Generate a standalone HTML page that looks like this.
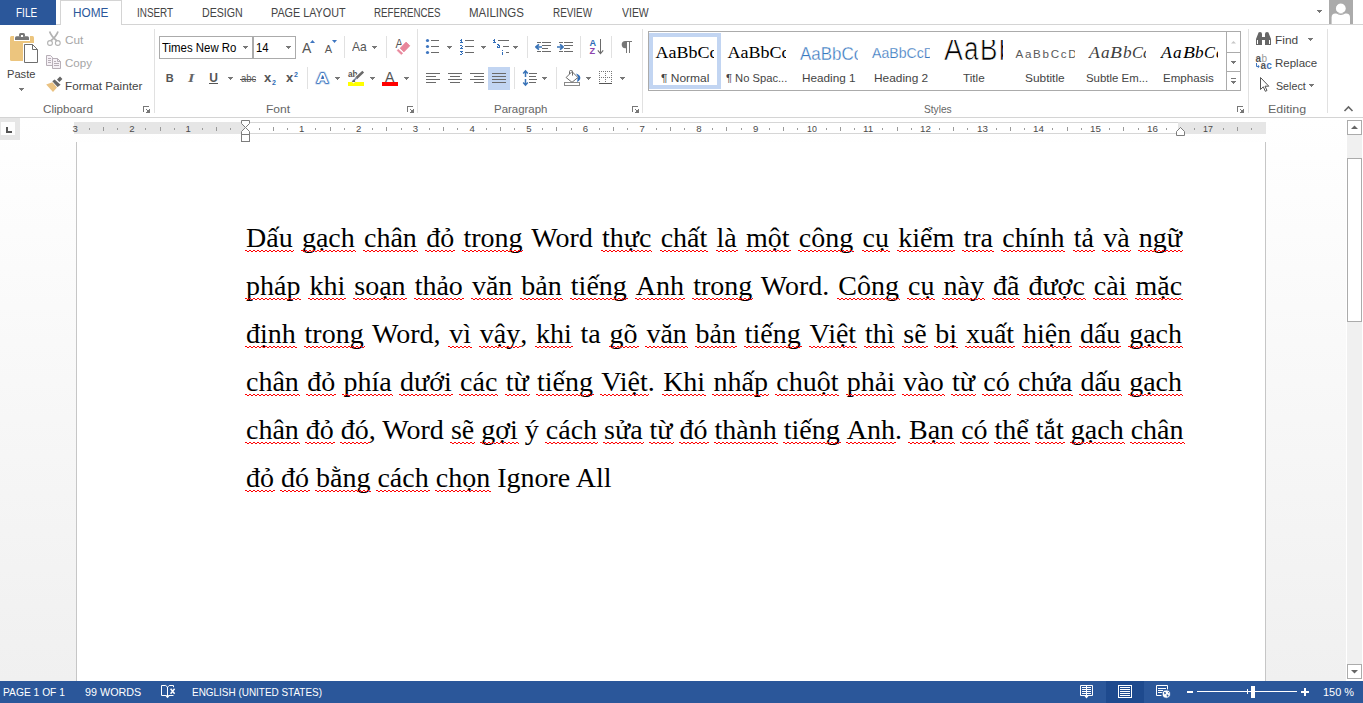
<!DOCTYPE html>
<html><head><meta charset="utf-8"><title>Word</title>
<style>
html,body{margin:0;padding:0;}
body{width:1363px;height:703px;overflow:hidden;position:relative;background:#fff;
 font-family:"Liberation Sans",sans-serif;font-size:12px;color:#444;}
.t{position:absolute;white-space:pre;line-height:normal;}
.b{position:absolute;box-sizing:border-box;}
#ws{left:0;top:118px;width:1363px;height:563px;background:linear-gradient(#ffffff,#f0f0f0);}
#page{left:76px;top:142px;width:1190px;height:539px;background:#fff;border-left:1px solid #c6c6c6;border-right:1px solid #c6c6c6;}
#status{left:0;top:681px;width:1363px;height:22px;background:#2b579a;}
#ico{position:absolute;left:0;top:0;}
.ln{position:absolute;left:246px;width:936px;height:48px;line-height:48px;white-space:nowrap;
 font-family:"Liberation Serif",serif;font-size:28px;color:#000;text-align:justify;text-align-last:justify;}
.ln.last{text-align:left;text-align-last:left;}
.s{position:relative;display:inline-block;line-height:48px;}
.s::after{content:"";position:absolute;left:-1px;right:-1px;top:36px;height:2px;
 background:linear-gradient(to right,#f00 2px,transparent 2px) 0 0/4px 1px repeat-x,
            linear-gradient(to right,transparent 2px,#f00 2px) 0 1px/4px 1px repeat-x;}
.clip{position:absolute;overflow:hidden;white-space:pre;}
.clip span{position:absolute;left:0;white-space:pre;line-height:normal;}
#ico rect{shape-rendering:crispEdges;}
.t{transform-origin:0 0;}

</style></head>
<body>
<div class="b" id="ws" style="left:0px;top:118px;width:1363px;height:563px;"></div>
<div class="b" id="page" style="left:76px;top:142px;width:1190px;height:539px;"></div>
<div class="b" id="status" style="left:0px;top:681px;width:1363px;height:22px;"></div>
<svg id="ico" width="1363" height="703" viewBox="0 0 1363 703">
<rect x="0" y="24" width="1363" height="1" fill="#d4d4d4" />
<rect x="0" y="0" width="56" height="25" fill="#2b579a" />
<rect x="60" y="0" width="62" height="25" fill="#d4d4d4" />
<rect x="61" y="1" width="60" height="24" fill="#fff" />
<rect x="0" y="117" width="1363" height="1" fill="#d4d4d4" />
<rect x="1329" y="0" width="24" height="24" fill="#ababab" />
<circle cx="1340.8" cy="8.4" r="4.9" fill="#fff"/>
<path d="M1331.6 24 V17.4 Q1331.6 13.6 1335.4 13.6 H1346.2 Q1350 13.6 1350 17.4 V24 Z" fill="#fff" stroke="none" stroke-width="1" />
<circle cx="1340.8" cy="8.4" r="6" fill="none" stroke="#ababab" stroke-width="1.1"/>
<rect x="1317" y="10" width="5" height="1" fill="#777" />
<rect x="1318" y="11" width="3" height="1" fill="#777" />
<rect x="1319" y="12" width="1" height="1" fill="#777" />
<rect x="154" y="29" width="1" height="84" fill="#e1e1e1" />
<rect x="417" y="29" width="1" height="84" fill="#e1e1e1" />
<rect x="642" y="29" width="1" height="84" fill="#e1e1e1" />
<rect x="1248" y="29" width="1" height="84" fill="#e1e1e1" />
<rect x="1327" y="29" width="1" height="84" fill="#e1e1e1" />
<rect x="344" y="36" width="1" height="22" fill="#e1e1e1" />
<rect x="386" y="36" width="1" height="22" fill="#e1e1e1" />
<rect x="527" y="36" width="1" height="22" fill="#e1e1e1" />
<rect x="580" y="36" width="1" height="22" fill="#e1e1e1" />
<rect x="611" y="36" width="1" height="22" fill="#e1e1e1" />
<rect x="307" y="67" width="1" height="22" fill="#e1e1e1" />
<rect x="514" y="67" width="1" height="22" fill="#e1e1e1" />
<rect x="556" y="67" width="1" height="22" fill="#e1e1e1" />
<rect x="143" y="106" width="6" height="1" fill="#777" />
<rect x="143" y="106" width="1" height="6" fill="#777" />
<rect x="146" y="109" width="1" height="1" fill="#777" />
<rect x="149" y="109" width="1" height="1" fill="#777" />
<rect x="147" y="110" width="3" height="3" fill="#777" />
<rect x="146" y="112" width="1" height="1" fill="#777" />
<rect x="407" y="106" width="6" height="1" fill="#777" />
<rect x="407" y="106" width="1" height="6" fill="#777" />
<rect x="410" y="109" width="1" height="1" fill="#777" />
<rect x="413" y="109" width="1" height="1" fill="#777" />
<rect x="411" y="110" width="3" height="3" fill="#777" />
<rect x="410" y="112" width="1" height="1" fill="#777" />
<rect x="632" y="106" width="6" height="1" fill="#777" />
<rect x="632" y="106" width="1" height="6" fill="#777" />
<rect x="635" y="109" width="1" height="1" fill="#777" />
<rect x="638" y="109" width="1" height="1" fill="#777" />
<rect x="636" y="110" width="3" height="3" fill="#777" />
<rect x="635" y="112" width="1" height="1" fill="#777" />
<rect x="1237" y="106" width="6" height="1" fill="#777" />
<rect x="1237" y="106" width="1" height="6" fill="#777" />
<rect x="1240" y="109" width="1" height="1" fill="#777" />
<rect x="1243" y="109" width="1" height="1" fill="#777" />
<rect x="1241" y="110" width="3" height="3" fill="#777" />
<rect x="1240" y="112" width="1" height="1" fill="#777" />
<path d="M1344.5 111 L1348.5 107 L1352.5 111" fill="none" stroke="#666" stroke-width="1.6" />
<path d="M10 37.5 q0 -1.5 1.5 -1.5 h21 q1.5 0 1.5 1.5 v22 q0 1.5 -1.5 1.5 h-21 q-1.5 0 -1.5 -1.5 Z" fill="#ecc57e" stroke="none" stroke-width="1" />
<rect x="14" y="36" width="16" height="5" fill="#fff" />
<path d="M15 40 v-2.3 q0 -1.5 1.5 -1.5 h11 q1.5 0 1.5 1.5 v2.3 Z" fill="#777" stroke="none" stroke-width="1" />
<path d="M19 36.5 v-2 q0 -1.5 1.5 -1.5 h3 q1.5 0 1.5 1.5 v2 Z" fill="#777" stroke="none" stroke-width="1" />
<rect x="21" y="35" width="2" height="2" fill="#fff" />
<rect x="23" y="43" width="16" height="21" fill="#fff" />
<path d="M24.5 44.5 h8 l5 5 v13 h-13 Z" fill="#fff" stroke="#6e6e6e" stroke-width="1" />
<path d="M32.5 44.5 v5 h5" fill="none" stroke="#6e6e6e" stroke-width="1" />
<rect x="19" y="88" width="5" height="1" fill="#777" />
<rect x="20" y="89" width="3" height="1" fill="#777" />
<rect x="21" y="90" width="1" height="1" fill="#777" />
<path d="M49.6 31.5 Q51 36 57 41 M58 31.5 Q56.6 36 50.6 41" fill="none" stroke="#b2b2b2" stroke-width="1.7" />
<circle cx="50" cy="43" r="2.4" fill="#fff" stroke="#b2b2b2" stroke-width="1.1"/>
<circle cx="57.8" cy="43" r="2.4" fill="#fff" stroke="#b2b2b2" stroke-width="1.1"/>
<path d="M46.5 55.5 h4 l2 2 v8 h-6 Z" fill="#f6f1f6" stroke="#b7afb7" stroke-width="1" />
<rect x="48" y="58" width="3" height="1" fill="#b7afb7" />
<rect x="48" y="60" width="3" height="1" fill="#b7afb7" />
<rect x="48" y="62" width="3" height="1" fill="#b7afb7" />
<path d="M52.5 58.5 h5 l3 3 v7 h-8 Z" fill="#f6f1f6" stroke="#b7afb7" stroke-width="1" />
<path d="M57.5 58.5 v3 h3" fill="none" stroke="#b7afb7" stroke-width="1" />
<rect x="54" y="61" width="2" height="1" fill="#b7afb7" />
<rect x="54" y="63" width="5" height="1" fill="#b7afb7" />
<rect x="54" y="65" width="5" height="1" fill="#b7afb7" />
<path d="M46.2 84.6 L52.4 82.2 L57 87.6 L53 92 Z" fill="#eac282" stroke="none" stroke-width="1" />
<path d="M52.3 81.2 L54.6 79.4 L60.6 84.8 L57.6 87 Z" fill="#666" stroke="none" stroke-width="1" />
<path d="M57 79.5 L60 76.6 L62.4 79 L59.4 82 Z" fill="#666" stroke="none" stroke-width="1" />
<rect x="159" y="36" width="94" height="23" fill="#ababab" />
<rect x="160" y="37" width="92" height="21" fill="#fff" />
<rect x="253" y="36" width="43" height="23" fill="#ababab" />
<rect x="254" y="37" width="41" height="21" fill="#fff" />
<rect x="243" y="46" width="5" height="1" fill="#777" />
<rect x="244" y="47" width="3" height="1" fill="#777" />
<rect x="245" y="48" width="1" height="1" fill="#777" />
<rect x="286" y="46" width="5" height="1" fill="#777" />
<rect x="287" y="47" width="3" height="1" fill="#777" />
<rect x="288" y="48" width="1" height="1" fill="#777" />
<rect x="209" y="83" width="9" height="1" fill="#555" />
<rect x="240" y="79" width="16" height="1" fill="#555" />
<rect x="228" y="77" width="5" height="1" fill="#777" />
<rect x="229" y="78" width="3" height="1" fill="#777" />
<rect x="230" y="79" width="1" height="1" fill="#777" />
<path d="M310 43 L312.5 40 L315 43 Z" fill="#3e76c0" stroke="none" stroke-width="1" />
<path d="M332 40 H337 L334.5 43 Z" fill="#3e76c0" stroke="none" stroke-width="1" />
<rect x="372" y="46" width="5" height="1" fill="#777" />
<rect x="373" y="47" width="3" height="1" fill="#777" />
<rect x="374" y="48" width="1" height="1" fill="#777" />
<text x="395.4" y="48.3" font-family="Liberation Sans, sans-serif" font-size="12.2" fill="#555" textLength="7.4" lengthAdjust="spacingAndGlyphs">A</text>
<path d="M406.1 41.9 L410 45.8 L403.9 52.1 L400 48.2 Z" fill="#fff" stroke="#fff" stroke-width="2.4" stroke-linejoin="round"/>
<path d="M406.1 42.1 L409.8 45.8 L403.9 51.9 L400.2 48.2 Z" fill="#e8869b" stroke="#e8869b" stroke-width="0.8" stroke-linejoin="round"/>
<path d="M398.2 49.2 L402.8 53.3 L401.3 54.6 L397.1 50.6 Z" fill="#e8869b" stroke="#e8869b" stroke-width="0.5" stroke-linejoin="round"/>
<text x="316.3" y="83.3" font-family="Liberation Sans, sans-serif" font-size="15.5" font-weight="bold" textLength="12.2" lengthAdjust="spacingAndGlyphs" fill="none" stroke="#c3d6ef" stroke-width="3.2" stroke-linejoin="round">A</text>
<text x="316.3" y="83.3" font-family="Liberation Sans, sans-serif" font-size="15.5" font-weight="bold" textLength="12.2" lengthAdjust="spacingAndGlyphs" fill="#fff" stroke="#2f6cb8" stroke-width="1.5" stroke-linejoin="round" paint-order="stroke">A</text>
<path d="M321.6 78.6 L322.9 75.2 L324.2 78.6 Z" fill="#2f6cb8" stroke="none" stroke-width="1" />
<rect x="335" y="77" width="5" height="1" fill="#777" />
<rect x="336" y="78" width="3" height="1" fill="#777" />
<rect x="337" y="79" width="1" height="1" fill="#777" />
<rect x="348" y="82" width="16" height="4" fill="#ffff00" />
<text x="348" y="77" font-family="Liberation Sans, sans-serif" font-size="8.4" font-weight="bold" fill="#555" textLength="9.6" lengthAdjust="spacingAndGlyphs">ab</text>
<path d="M363.4 71.4 L352 81.8" fill="none" stroke="#fff" stroke-width="4.4" />
<path d="M363.2 71.6 L356.2 78.2" fill="none" stroke="#6a6a6a" stroke-width="2.6" />
<path d="M356.8 77.6 L352.6 81.6" fill="none" stroke="#8090a8" stroke-width="1.8" />
<path d="M351.6 82 L354.6 79.2 L355.2 82 Z" fill="#666" stroke="none" stroke-width="1" />
<rect x="370" y="77" width="5" height="1" fill="#777" />
<rect x="371" y="78" width="3" height="1" fill="#777" />
<rect x="372" y="79" width="1" height="1" fill="#777" />
<rect x="382" y="82" width="16" height="4" fill="#ff0000" />
<rect x="404" y="77" width="5" height="1" fill="#777" />
<rect x="405" y="78" width="3" height="1" fill="#777" />
<rect x="406" y="79" width="1" height="1" fill="#777" />
<circle cx="427.5" cy="40.5" r="1.6" fill="#3e76c0"/>
<rect x="431" y="40" width="8" height="1" fill="#6a6a6a" />
<circle cx="427.5" cy="46.5" r="1.6" fill="#3e76c0"/>
<rect x="431" y="46" width="8" height="1" fill="#6a6a6a" />
<circle cx="427.5" cy="52.5" r="1.6" fill="#3e76c0"/>
<rect x="431" y="52" width="8" height="1" fill="#6a6a6a" />
<rect x="447" y="46" width="5" height="1" fill="#777" />
<rect x="448" y="47" width="3" height="1" fill="#777" />
<rect x="449" y="48" width="1" height="1" fill="#777" />
<rect x="461" y="39" width="1" height="1" fill="#316db8" />
<rect x="460" y="40" width="1" height="1" fill="#316db8" />
<rect x="461" y="40" width="1" height="1" fill="#316db8" />
<rect x="461" y="41" width="1" height="1" fill="#316db8" />
<rect x="460" y="42" width="1" height="1" fill="#316db8" />
<rect x="461" y="42" width="1" height="1" fill="#316db8" />
<rect x="462" y="42" width="1" height="1" fill="#316db8" />
<rect x="460" y="45" width="1" height="1" fill="#316db8" />
<rect x="461" y="45" width="1" height="1" fill="#316db8" />
<rect x="462" y="46" width="1" height="1" fill="#316db8" />
<rect x="461" y="47" width="1" height="1" fill="#316db8" />
<rect x="460" y="48" width="1" height="1" fill="#316db8" />
<rect x="461" y="48" width="1" height="1" fill="#316db8" />
<rect x="462" y="48" width="1" height="1" fill="#316db8" />
<rect x="460" y="51" width="1" height="1" fill="#316db8" />
<rect x="461" y="51" width="1" height="1" fill="#316db8" />
<rect x="462" y="51" width="1" height="1" fill="#316db8" />
<rect x="461" y="52" width="1" height="1" fill="#316db8" />
<rect x="462" y="53" width="1" height="1" fill="#316db8" />
<rect x="460" y="54" width="1" height="1" fill="#316db8" />
<rect x="461" y="54" width="1" height="1" fill="#316db8" />
<rect x="465" y="40" width="9" height="1" fill="#6a6a6a" />
<rect x="465" y="46" width="9" height="1" fill="#6a6a6a" />
<rect x="465" y="52" width="9" height="1" fill="#6a6a6a" />
<rect x="481" y="46" width="5" height="1" fill="#777" />
<rect x="482" y="47" width="3" height="1" fill="#777" />
<rect x="483" y="48" width="1" height="1" fill="#777" />
<rect x="494" y="39" width="1" height="1" fill="#316db8" />
<rect x="493" y="40" width="1" height="1" fill="#316db8" />
<rect x="494" y="40" width="1" height="1" fill="#316db8" />
<rect x="494" y="41" width="1" height="1" fill="#316db8" />
<rect x="493" y="42" width="1" height="1" fill="#316db8" />
<rect x="494" y="42" width="1" height="1" fill="#316db8" />
<rect x="495" y="42" width="1" height="1" fill="#316db8" />
<rect x="497" y="44" width="1" height="1" fill="#316db8" />
<rect x="498" y="44" width="1" height="1" fill="#316db8" />
<rect x="498" y="45" width="1" height="1" fill="#316db8" />
<rect x="499" y="45" width="1" height="1" fill="#316db8" />
<rect x="497" y="46" width="1" height="1" fill="#316db8" />
<rect x="499" y="46" width="1" height="1" fill="#316db8" />
<rect x="497" y="47" width="1" height="1" fill="#316db8" />
<rect x="498" y="47" width="1" height="1" fill="#316db8" />
<rect x="499" y="47" width="1" height="1" fill="#316db8" />
<rect x="502" y="50" width="1" height="1" fill="#316db8" />
<rect x="502" y="52" width="1" height="3" fill="#316db8" />
<rect x="498" y="40" width="11" height="1" fill="#6a6a6a" />
<rect x="503" y="46" width="6" height="1" fill="#6a6a6a" />
<rect x="506" y="52" width="3" height="1" fill="#6a6a6a" />
<rect x="513" y="46" width="5" height="1" fill="#777" />
<rect x="514" y="47" width="3" height="1" fill="#777" />
<rect x="515" y="48" width="1" height="1" fill="#777" />
<rect x="537" y="42" width="4" height="1" fill="#6a6a6a" />
<rect x="542" y="42" width="9" height="1" fill="#6a6a6a" />
<rect x="537" y="51" width="4" height="1" fill="#6a6a6a" />
<rect x="542" y="51" width="9" height="1" fill="#6a6a6a" />
<rect x="542" y="45" width="9" height="1" fill="#6a6a6a" />
<rect x="542" y="48" width="6" height="1" fill="#6a6a6a" />
<path d="M542 47 H535.8 M539 44.3 L535.9 47 L539 49.7" fill="none" stroke="#3a74b8" stroke-width="1.7" stroke-linejoin="round"/>
<rect x="559" y="42" width="4" height="1" fill="#6a6a6a" />
<rect x="564" y="42" width="9" height="1" fill="#6a6a6a" />
<rect x="559" y="51" width="4" height="1" fill="#6a6a6a" />
<rect x="564" y="51" width="9" height="1" fill="#6a6a6a" />
<rect x="564" y="45" width="9" height="1" fill="#6a6a6a" />
<rect x="564" y="48" width="6" height="1" fill="#6a6a6a" />
<path d="M557 47 H563.2 M560 44.3 L563.1 47 L560 49.7" fill="none" stroke="#3a74b8" stroke-width="1.7" stroke-linejoin="round"/>
<text x="589.6" y="46" font-family="Liberation Sans, sans-serif" font-size="9.6" font-weight="bold" fill="#2f6cb8" textLength="6.6" lengthAdjust="spacingAndGlyphs">A</text>
<text x="589.6" y="54" font-family="Liberation Sans, sans-serif" font-size="9.6" font-weight="bold" fill="#8e44ad" textLength="5.6" lengthAdjust="spacingAndGlyphs">Z</text>
<rect x="600" y="39" width="1" height="15" fill="#6a6a6a" />
<path d="M597.8 50.3 L600.5 53.6 L603.2 50.3" fill="none" stroke="#6a6a6a" stroke-width="1.1" />
<path d="M626 41 h-0.7 a3.6 3.6 0 0 0 0 7.2 h0.7 Z" fill="#777" stroke="none" stroke-width="1" />
<rect x="626" y="41" width="1" height="12" fill="#777" />
<rect x="629" y="41" width="1" height="12" fill="#777" />
<rect x="625" y="41" width="7" height="1" fill="#777" />
<rect x="488" y="67" width="22" height="23" fill="#c2d5f2" />
<rect x="426" y="73" width="14" height="1" fill="#6a6a6a" />
<rect x="448" y="73" width="14" height="1" fill="#6a6a6a" />
<rect x="470" y="73" width="14" height="1" fill="#6a6a6a" />
<rect x="492" y="73" width="14" height="1" fill="#6a6a6a" />
<rect x="529" y="73" width="8" height="1" fill="#6a6a6a" />
<rect x="426" y="76" width="10" height="1" fill="#6a6a6a" />
<rect x="450" y="76" width="10" height="1" fill="#6a6a6a" />
<rect x="474" y="76" width="10" height="1" fill="#6a6a6a" />
<rect x="492" y="76" width="14" height="1" fill="#6a6a6a" />
<rect x="529" y="76" width="7" height="1" fill="#6a6a6a" />
<rect x="426" y="79" width="14" height="1" fill="#6a6a6a" />
<rect x="448" y="79" width="14" height="1" fill="#6a6a6a" />
<rect x="470" y="79" width="14" height="1" fill="#6a6a6a" />
<rect x="492" y="79" width="14" height="1" fill="#6a6a6a" />
<rect x="529" y="79" width="8" height="1" fill="#6a6a6a" />
<rect x="426" y="82" width="10" height="1" fill="#6a6a6a" />
<rect x="450" y="82" width="10" height="1" fill="#6a6a6a" />
<rect x="474" y="82" width="10" height="1" fill="#6a6a6a" />
<rect x="492" y="82" width="14" height="1" fill="#6a6a6a" />
<rect x="529" y="82" width="7" height="1" fill="#6a6a6a" />
<path d="M525.5 70.6 V77 M523.2 73.4 L525.5 70.8 L527.8 73.4 M525.5 79 V85.4 M523.2 82.6 L525.5 85.2 L527.8 82.6" fill="none" stroke="#3a74b8" stroke-width="1.5" />
<rect x="542" y="77" width="5" height="1" fill="#777" />
<rect x="543" y="78" width="3" height="1" fill="#777" />
<rect x="544" y="79" width="1" height="1" fill="#777" />
<rect x="564" y="82" width="16" height="4" fill="#8a8a8a" />
<rect x="565" y="83" width="14" height="2" fill="#fff" />
<path d="M576 73.4 Q581.2 75 580.2 79 Q579.4 81 577 82 Q577.8 79.6 577.4 78 L578.4 77.5 Z" fill="#2f6cb8" stroke="none" stroke-width="1" />
<path d="M572 71.6 L577.9 77.5 L572 82.3 L566.1 77.5 Z" fill="#fff" stroke="#6a6a6a" stroke-width="1" />
<path d="M569.5 74 V71.5 Q569.5 70.5 570.5 70.5 H571.5 Q572.5 70.5 572.5 71.5 V75.6" fill="none" stroke="#6a6a6a" stroke-width="1" />
<rect x="586" y="77" width="5" height="1" fill="#777" />
<rect x="587" y="78" width="3" height="1" fill="#777" />
<rect x="588" y="79" width="1" height="1" fill="#777" />
<rect x="599" y="71" width="1" height="1" fill="#777" />
<rect x="601" y="71" width="1" height="1" fill="#777" />
<rect x="603" y="71" width="1" height="1" fill="#777" />
<rect x="605" y="71" width="1" height="1" fill="#777" />
<rect x="607" y="71" width="1" height="1" fill="#777" />
<rect x="609" y="71" width="1" height="1" fill="#777" />
<rect x="611" y="71" width="1" height="1" fill="#777" />
<rect x="599" y="77" width="1" height="1" fill="#777" />
<rect x="601" y="77" width="1" height="1" fill="#777" />
<rect x="603" y="77" width="1" height="1" fill="#777" />
<rect x="605" y="77" width="1" height="1" fill="#777" />
<rect x="607" y="77" width="1" height="1" fill="#777" />
<rect x="609" y="77" width="1" height="1" fill="#777" />
<rect x="611" y="77" width="1" height="1" fill="#777" />
<rect x="599" y="71" width="1" height="1" fill="#777" />
<rect x="599" y="73" width="1" height="1" fill="#777" />
<rect x="599" y="75" width="1" height="1" fill="#777" />
<rect x="599" y="77" width="1" height="1" fill="#777" />
<rect x="599" y="79" width="1" height="1" fill="#777" />
<rect x="599" y="81" width="1" height="1" fill="#777" />
<rect x="605" y="71" width="1" height="1" fill="#777" />
<rect x="605" y="73" width="1" height="1" fill="#777" />
<rect x="605" y="75" width="1" height="1" fill="#777" />
<rect x="605" y="77" width="1" height="1" fill="#777" />
<rect x="605" y="79" width="1" height="1" fill="#777" />
<rect x="605" y="81" width="1" height="1" fill="#777" />
<rect x="611" y="71" width="1" height="1" fill="#777" />
<rect x="611" y="73" width="1" height="1" fill="#777" />
<rect x="611" y="75" width="1" height="1" fill="#777" />
<rect x="611" y="77" width="1" height="1" fill="#777" />
<rect x="611" y="79" width="1" height="1" fill="#777" />
<rect x="611" y="81" width="1" height="1" fill="#777" />
<rect x="599" y="83" width="13" height="1" fill="#555" />
<rect x="620" y="77" width="5" height="1" fill="#777" />
<rect x="621" y="78" width="3" height="1" fill="#777" />
<rect x="622" y="79" width="1" height="1" fill="#777" />
<rect x="648" y="31" width="593" height="60" fill="#ababab" />
<rect x="649" y="32" width="591" height="58" fill="#fff" />
<rect x="649" y="33" width="72" height="56" fill="#c2d5f2" />
<rect x="653" y="37" width="64" height="48" fill="#fff" />
<rect x="1226" y="32" width="1" height="58" fill="#ababab" />
<rect x="1227" y="52" width="13" height="1" fill="#ababab" />
<rect x="1227" y="71" width="13" height="1" fill="#ababab" />
<path d="M1231 43.5 L1233.5 41 L1236 43.5 Z" fill="#c8c8c8" stroke="none" stroke-width="1" />
<rect x="1231" y="61" width="5" height="1" fill="#777" />
<rect x="1232" y="62" width="3" height="1" fill="#777" />
<rect x="1233" y="63" width="1" height="1" fill="#777" />
<rect x="1231" y="78" width="5" height="1" fill="#777" />
<rect x="1231" y="81" width="5" height="1" fill="#777" />
<rect x="1232" y="82" width="3" height="1" fill="#777" />
<rect x="1233" y="83" width="1" height="1" fill="#777" />
<path d="M1256 45 v-6 l2 -5 q0 -2 2 -2 q2 0 2 2 v3 h3 v-3 q0 -2 2 -2 q2 0 2 2 l2 5 v6 h-6 v-5 h-3 v5 Z" fill="#666" stroke="none" stroke-width="1" />
<rect x="1257" y="40" width="1" height="4" fill="#fff" />
<rect x="1269" y="40" width="1" height="4" fill="#fff" />
<rect x="1308" y="38" width="5" height="1" fill="#777" />
<rect x="1309" y="39" width="3" height="1" fill="#777" />
<rect x="1310" y="40" width="1" height="1" fill="#777" />
<text x="1255.6" y="61.5" font-family="Liberation Sans, sans-serif" font-size="10" fill="#555" font-weight="bold">a</text>
<text x="1261.4" y="61.5" font-family="Liberation Sans, sans-serif" font-size="10" fill="#999">b</text>
<text x="1260.4" y="68.6" font-family="Liberation Sans, sans-serif" font-size="10" fill="#555" font-weight="bold">a</text>
<text x="1266.2" y="68.6" font-family="Liberation Sans, sans-serif" font-size="10" fill="#3e76c0" font-weight="bold">c</text>
<path d="M1256.5 63 v3.5 h2.5 M1257.8 65.2 L1259.3 66.5 L1257.8 67.8" fill="none" stroke="#3e76c0" stroke-width="1" />
<path d="M1260.5 77.5 V89.5 L1263.3 86.8 L1265.3 91.3 L1267 90.5 L1265 86.2 H1268.8 Z" fill="#fff" stroke="#555" stroke-width="1" />
<rect x="1309" y="84" width="5" height="1" fill="#777" />
<rect x="1310" y="85" width="3" height="1" fill="#777" />
<rect x="1311" y="86" width="1" height="1" fill="#777" />
<rect x="0" y="118" width="20" height="22" fill="#e6e6e6" />
<rect x="1" y="122" width="14" height="13" fill="#fdfdfd" />
<rect x="6" y="127" width="2" height="6" fill="#555" />
<rect x="6" y="131" width="6" height="2" fill="#555" />
<rect x="74" y="122" width="1192" height="12" fill="#e6e6e6" />
<rect x="246" y="122" width="932" height="12" fill="#fff" />
<rect x="246" y="122" width="932" height="1" fill="#d6d6d6" />
<rect x="246" y="133" width="932" height="1" fill="#d6d6d6" />
<rect x="89" y="128" width="1" height="2" fill="#9a9a9a" />
<rect x="103" y="127" width="1" height="4" fill="#9a9a9a" />
<rect x="117" y="128" width="1" height="2" fill="#9a9a9a" />
<rect x="145" y="128" width="1" height="2" fill="#9a9a9a" />
<rect x="160" y="127" width="1" height="4" fill="#9a9a9a" />
<rect x="174" y="128" width="1" height="2" fill="#9a9a9a" />
<rect x="202" y="128" width="1" height="2" fill="#9a9a9a" />
<rect x="216" y="127" width="1" height="4" fill="#9a9a9a" />
<rect x="230" y="128" width="1" height="2" fill="#9a9a9a" />
<rect x="259" y="128" width="1" height="2" fill="#9a9a9a" />
<rect x="273" y="127" width="1" height="4" fill="#9a9a9a" />
<rect x="287" y="128" width="1" height="2" fill="#9a9a9a" />
<rect x="315" y="128" width="1" height="2" fill="#9a9a9a" />
<rect x="330" y="127" width="1" height="4" fill="#9a9a9a" />
<rect x="344" y="128" width="1" height="2" fill="#9a9a9a" />
<rect x="372" y="128" width="1" height="2" fill="#9a9a9a" />
<rect x="386" y="127" width="1" height="4" fill="#9a9a9a" />
<rect x="401" y="128" width="1" height="2" fill="#9a9a9a" />
<rect x="429" y="128" width="1" height="2" fill="#9a9a9a" />
<rect x="443" y="127" width="1" height="4" fill="#9a9a9a" />
<rect x="457" y="128" width="1" height="2" fill="#9a9a9a" />
<rect x="486" y="128" width="1" height="2" fill="#9a9a9a" />
<rect x="500" y="127" width="1" height="4" fill="#9a9a9a" />
<rect x="514" y="128" width="1" height="2" fill="#9a9a9a" />
<rect x="542" y="128" width="1" height="2" fill="#9a9a9a" />
<rect x="556" y="127" width="1" height="4" fill="#9a9a9a" />
<rect x="571" y="128" width="1" height="2" fill="#9a9a9a" />
<rect x="599" y="128" width="1" height="2" fill="#9a9a9a" />
<rect x="613" y="127" width="1" height="4" fill="#9a9a9a" />
<rect x="627" y="128" width="1" height="2" fill="#9a9a9a" />
<rect x="656" y="128" width="1" height="2" fill="#9a9a9a" />
<rect x="670" y="127" width="1" height="4" fill="#9a9a9a" />
<rect x="684" y="128" width="1" height="2" fill="#9a9a9a" />
<rect x="712" y="128" width="1" height="2" fill="#9a9a9a" />
<rect x="726" y="127" width="1" height="4" fill="#9a9a9a" />
<rect x="741" y="128" width="1" height="2" fill="#9a9a9a" />
<rect x="769" y="128" width="1" height="2" fill="#9a9a9a" />
<rect x="783" y="127" width="1" height="4" fill="#9a9a9a" />
<rect x="797" y="128" width="1" height="2" fill="#9a9a9a" />
<rect x="826" y="128" width="1" height="2" fill="#9a9a9a" />
<rect x="840" y="127" width="1" height="4" fill="#9a9a9a" />
<rect x="854" y="128" width="1" height="2" fill="#9a9a9a" />
<rect x="882" y="128" width="1" height="2" fill="#9a9a9a" />
<rect x="897" y="127" width="1" height="4" fill="#9a9a9a" />
<rect x="911" y="128" width="1" height="2" fill="#9a9a9a" />
<rect x="939" y="128" width="1" height="2" fill="#9a9a9a" />
<rect x="953" y="127" width="1" height="4" fill="#9a9a9a" />
<rect x="967" y="128" width="1" height="2" fill="#9a9a9a" />
<rect x="996" y="128" width="1" height="2" fill="#9a9a9a" />
<rect x="1010" y="127" width="1" height="4" fill="#9a9a9a" />
<rect x="1024" y="128" width="1" height="2" fill="#9a9a9a" />
<rect x="1052" y="128" width="1" height="2" fill="#9a9a9a" />
<rect x="1067" y="127" width="1" height="4" fill="#9a9a9a" />
<rect x="1081" y="128" width="1" height="2" fill="#9a9a9a" />
<rect x="1109" y="128" width="1" height="2" fill="#9a9a9a" />
<rect x="1123" y="127" width="1" height="4" fill="#9a9a9a" />
<rect x="1138" y="128" width="1" height="2" fill="#9a9a9a" />
<rect x="1166" y="128" width="1" height="2" fill="#9a9a9a" />
<rect x="1180" y="127" width="1" height="4" fill="#9a9a9a" />
<rect x="1194" y="128" width="1" height="2" fill="#9a9a9a" />
<rect x="1223" y="128" width="1" height="2" fill="#9a9a9a" />
<rect x="1237" y="127" width="1" height="4" fill="#9a9a9a" />
<rect x="1251" y="128" width="1" height="2" fill="#9a9a9a" />
<path d="M241.5 120.5 h8 v3 l-4 4 l-4 -4 Z" fill="#fff" stroke="#7d7d7d" stroke-width="1"/>
<path d="M241.5 134.5 v-3 l4 -4 l4 4 v3 Z" fill="#fff" stroke="#7d7d7d" stroke-width="1"/>
<rect x="241.5" y="134.5" width="8" height="7" fill="#fff" stroke="#7d7d7d" stroke-width="1" style="shape-rendering:auto"/>
<path d="M1176.5 135.5 v-4 l4 -4 l4 4 v4 Z" fill="#fff" stroke="#7d7d7d" stroke-width="1"/>
<rect x="1346" y="118" width="17" height="563" fill="#fff" />
<rect x="1347" y="135" width="15" height="530" fill="#f0f0f0" />
<rect x="1347.5" y="120.5" width="14" height="14" fill="#fff" stroke="#ababab" stroke-width="1"/>
<path d="M1351 129 L1354.5 125.5 L1358 129 Z" fill="#666" stroke="none" stroke-width="1" />
<rect x="1347.5" y="158.5" width="14" height="163" fill="#fff" stroke="#ababab" stroke-width="1"/>
<rect x="1347.5" y="664.5" width="14" height="14" fill="#fff" stroke="#ababab" stroke-width="1"/>
<path d="M1351 670 H1358 L1354.5 673.5 Z" fill="#666" stroke="none" stroke-width="1" />
<path d="M167.5 687.2 L165.8 685.5 H161.5 V695.5 H166.5" fill="none" stroke="#fff" stroke-width="1" />
<path d="M167.5 687.2 L169.2 685.5 H173.5 V687.2" fill="none" stroke="#fff" stroke-width="1" />
<path d="M168.5 695.5 H173.5" fill="none" stroke="#fff" stroke-width="1" />
<rect x="167" y="687" width="1" height="10" fill="#fff" />
<path d="M165.2 695.6 L167.5 698.3 L169.8 695.6 Z" fill="#fff" stroke="none" stroke-width="1" />
<path d="M170.6 688.7 L174.6 693.7 M174.6 688.7 L170.6 693.7" fill="none" stroke="#fff" stroke-width="1.5" />
<path d="M1080.5 685.5 h12 v10 h-12 Z" fill="none" stroke="#fff" stroke-width="1" />
<rect x="1086" y="686" width="1" height="12" fill="#fff" />
<path d="M1084.5 696 L1086.5 698.4 L1088.5 696 Z" fill="#fff" stroke="none" stroke-width="1" />
<rect x="1082" y="687" width="4" height="1" fill="#fff" />
<rect x="1087" y="687" width="4" height="1" fill="#fff" />
<rect x="1082" y="689" width="4" height="1" fill="#fff" />
<rect x="1087" y="689" width="4" height="1" fill="#fff" />
<rect x="1082" y="691" width="4" height="1" fill="#fff" />
<rect x="1087" y="691" width="4" height="1" fill="#fff" />
<rect x="1082" y="693" width="4" height="1" fill="#fff" />
<rect x="1087" y="693" width="4" height="1" fill="#fff" />
<rect x="1106" y="681" width="38" height="22" fill="#1e4a8e" />
<rect x="1118" y="685" width="14" height="13" fill="#fff" />
<rect x="1119" y="686" width="12" height="11" fill="#1e4a8e" />
<rect x="1120" y="687" width="10" height="1" fill="#fff" />
<rect x="1120" y="689" width="10" height="1" fill="#fff" />
<rect x="1120" y="691" width="10" height="1" fill="#fff" />
<rect x="1120" y="693" width="10" height="1" fill="#fff" />
<rect x="1120" y="695" width="10" height="1" fill="#fff" />
<path d="M1156.5 685.5 h11 v4 M1156.5 685.5 v10 h5" fill="none" stroke="#fff" stroke-width="1" />
<rect x="1158" y="688" width="8" height="1" fill="#fff" />
<rect x="1158" y="690" width="5" height="1" fill="#fff" />
<rect x="1158" y="692" width="5" height="1" fill="#fff" />
<circle cx="1166.3" cy="694.1" r="4.1" fill="#fff" stroke="#2b579a" stroke-width="0.8"/>
<path d="M1164 692.2 q1.4 -0.6 2 0.8 q-0.4 1.6 -1.6 1.2 Z M1166.6 694.6 q1.8 -0.4 2 1.4 q-1 1 -1.8 0.2 Z M1167.6 691.4 l1.6 1.2 l-0.6 0.8 Z" fill="#2b579a" stroke="none" stroke-width="1" />
<rect x="1187" y="691" width="6" height="2" fill="#fff" />
<rect x="1197" y="691" width="100" height="1" fill="#fff" />
<rect x="1247" y="689" width="1" height="5" fill="#fff" />
<rect x="1251" y="686" width="4" height="12" fill="#fff" />
<rect x="1301" y="691" width="8" height="2" fill="#fff" />
<rect x="1304" y="688" width="2" height="8" fill="#fff" />
</svg>
<div class="clip" style="left:655px;top:36px;width:59px;height:30px;"><span style="left:0.5px;top:7.3px;font-family:'Liberation Serif',serif;font-size:18px;color:#000;letter-spacing:0px;transform:scale(1,0.93);transform-origin:0 0;">AaBbCcDd</span></div>
<div class="clip" style="left:727px;top:36px;width:59px;height:30px;"><span style="left:0.5px;top:7.3px;font-family:'Liberation Serif',serif;font-size:18px;color:#000;letter-spacing:0px;transform:scale(1,0.93);transform-origin:0 0;">AaBbCcDd</span></div>
<div class="clip" style="left:799px;top:36px;width:59px;height:30px;"><span style="left:0.8px;top:7px;font-family:'Liberation Sans',sans-serif;font-size:19.2px;color:#3878c0;letter-spacing:0px;transform:scale(0.885,1);transform-origin:0 0;-webkit-text-stroke:0.35px #fff;">AaBbCcDd</span></div>
<div class="clip" style="left:871px;top:36px;width:59px;height:30px;"><span style="left:0.8px;top:8.8px;font-family:'Liberation Sans',sans-serif;font-size:14.9px;color:#3878c0;letter-spacing:0px;transform:scale(0.947,1);transform-origin:0 0;-webkit-text-stroke:0.25px #fff;">AaBbCcDd</span></div>
<div class="clip" style="left:943px;top:40px;width:59.6px;height:26px;"><span style="left:1.0px;top:-9.6px;font-family:'Liberation Sans',sans-serif;font-size:32.6px;color:#000;-webkit-text-stroke:0.7px #fff;transform:scale(0.87,1);transform-origin:0 0;">A</span><span style="left:20.6px;top:-9.6px;font-family:'Liberation Sans',sans-serif;font-size:32.6px;color:#000;-webkit-text-stroke:0.7px #fff;transform:scale(0.8,1);transform-origin:0 0;">a</span><span style="left:37.4px;top:-9.6px;font-family:'Liberation Sans',sans-serif;font-size:32.6px;color:#000;-webkit-text-stroke:0.7px #fff;transform:scale(0.8,1);transform-origin:0 0;">B</span><span style="left:55.8px;top:-9.6px;font-family:'Liberation Sans',sans-serif;font-size:32.6px;color:#000;-webkit-text-stroke:0.7px #fff;transform:scale(0.8,1);transform-origin:0 0;">b</span></div>
<div class="clip" style="left:1015px;top:36px;width:59.5px;height:30px;"><span style="left:0.5px;top:11px;font-family:'Liberation Sans',sans-serif;font-size:11.6px;color:#5a5a5a;letter-spacing:1.7px;">AaBbCcDd</span></div>
<div class="ln" style="top:213.5px"><span class="s">Dấu</span> <span class="s">gạch</span> <span class="s">chân</span> <span class="s">đỏ</span> <span class="s">trong</span> Word <span class="s">thực</span> <span class="s">chất</span> <span class="s">là</span> <span class="s">một</span> <span class="s">công</span> <span class="s">cụ</span> <span class="s">kiểm</span> <span class="s">tra</span> <span class="s">chính</span> <span class="s">tả</span> <span class="s">và</span> <span class="s">ngữ</span></div>
<div class="ln" style="top:261.5px"><span class="s">pháp</span> <span class="s">khi</span> <span class="s">soạn</span> <span class="s">thảo</span> <span class="s">văn</span> <span class="s">bản</span> <span class="s">tiếng</span> <span class="s">Anh</span> <span class="s">trong</span> Word. <span class="s">Công</span> <span class="s">cụ</span> <span class="s">này</span> <span class="s">đã</span> <span class="s">được</span> <span class="s">cài</span> <span class="s">mặc</span></div>
<div class="ln" style="top:309.5px"><span class="s">định</span> <span class="s">trong</span> Word, <span class="s">vì</span> <span class="s">vậy</span>, <span class="s">khi</span> ta <span class="s">gõ</span> <span class="s">văn</span> <span class="s">bản</span> <span class="s">tiếng</span> <span class="s">Việt</span> <span class="s">thì</span> <span class="s">sẽ</span> <span class="s">bị</span> <span class="s">xuất</span> <span class="s">hiện</span> <span class="s">dấu</span> <span class="s">gạch</span></div>
<div class="ln" style="top:357.5px"><span class="s">chân</span> <span class="s">đỏ</span> <span class="s">phía</span> <span class="s">dưới</span> <span class="s">các</span> <span class="s">từ</span> <span class="s">tiếng</span> <span class="s">Việt</span>. <span class="s">Khi</span> <span class="s">nhấp</span> <span class="s">chuột</span> <span class="s">phải</span> <span class="s">vào</span> <span class="s">từ</span> <span class="s">có</span> <span class="s">chứa</span> <span class="s">dấu</span> <span class="s">gạch</span></div>
<div class="ln" style="top:405.5px"><span class="s">chân</span> <span class="s">đỏ</span> <span class="s">đó</span>, Word <span class="s">sẽ</span> <span class="s">gợi</span> ý <span class="s">cách</span> <span class="s">sửa</span> <span class="s">từ</span> <span class="s">đó</span> <span class="s">thành</span> <span class="s">tiếng</span> <span class="s">Anh</span>. <span class="s">Bạn</span> <span class="s">có</span> <span class="s">thể</span> <span class="s">tắt</span> <span class="s">gạch</span> <span class="s">chân</span></div>
<div class="ln last" style="top:453.5px"><span class="s">đỏ</span> <span class="s">đó</span> <span class="s">bằng</span> <span class="s">cách</span> <span class="s">chọn</span> Ignore All</div>
<!-- labels -->
<div class="t" style="left:15.57px;top:6.00px;font-size:12px;color:#fff;transform:scale(0.8333,1);">FILE</div>
<div class="t" style="left:72.62px;top:6.00px;font-size:12px;color:#2b579a;transform:scale(0.9829,1);">HOME</div>
<div class="t" style="left:136.67px;top:6.00px;font-size:12px;color:#444;transform:scale(0.8256,1);">INSERT</div>
<div class="t" style="left:201.71px;top:6.00px;font-size:12px;color:#444;transform:scale(0.8864,1);">DESIGN</div>
<div class="t" style="left:270.70px;top:6.00px;font-size:12px;color:#444;transform:scale(0.8988,1);">PAGE LAYOUT</div>
<div class="t" style="left:373.89px;top:6.00px;font-size:12px;color:#444;transform:scale(0.8111,1);">REFERENCES</div>
<div class="t" style="left:469.24px;top:6.00px;font-size:12px;color:#444;transform:scale(0.9589,1);">MAILINGS</div>
<div class="t" style="left:552.77px;top:6.00px;font-size:12px;color:#444;transform:scale(0.8255,1);">REVIEW</div>
<div class="t" style="left:622.00px;top:6.00px;font-size:12px;color:#444;transform:scale(0.8710,1);">VIEW</div>
<div class="t" style="left:7.49px;top:68.00px;font-size:11px;color:#444;transform:scale(1.0111,1);">Paste</div>
<div class="t" style="left:65.40px;top:34.00px;font-size:11px;color:#a6a6a6;transform:scale(1.0706,1);">Cut</div>
<div class="t" style="left:65.40px;top:57.00px;font-size:11px;color:#a6a6a6;transform:scale(1.0500,1);">Copy</div>
<div class="t" style="left:64.64px;top:80.00px;font-size:11px;color:#444;transform:scale(1.0625,1);">Format Painter</div>
<div class="t" style="left:42.70px;top:103.00px;font-size:11px;color:#666;transform:scale(1.0596,1);">Clipboard</div>
<div class="t" style="left:265.50px;top:103.00px;font-size:11px;color:#666;transform:scale(1.0952,1);">Font</div>
<div class="t" style="left:494.46px;top:103.00px;font-size:11px;color:#666;transform:scale(1.0400,1);">Paragraph</div>
<div class="t" style="left:923.50px;top:103.00px;font-size:11px;color:#666;transform:scale(0.9233,1);">Styles</div>
<div class="t" style="left:1268.37px;top:103.00px;font-size:11px;color:#666;transform:scale(1.1313,1);">Editing</div>
<div class="t" style="left:162.40px;top:41.00px;font-size:12px;color:#000;transform:scale(0.9513,1);">Times New Ro</div>
<div class="t" style="left:255.96px;top:41.00px;font-size:12px;color:#000;transform:scale(0.9417,1);">14</div>
<div class="t" style="left:165.70px;top:72.00px;font-size:11px;color:#555;font-weight:bold;">B</div>
<div class="t" style="left:188.40px;top:71.00px;font-size:12.6px;color:#666;transform:scale(1.3000,1);font-weight:bold;font-style:italic;font-family:'Liberation Serif', serif;">I</div>
<div class="t" style="left:209.35px;top:71.00px;font-size:12px;color:#555;font-weight:bold;">U</div>
<div class="t" style="left:240.50px;top:72.00px;font-size:11px;color:#555;transform:scale(0.8611,1);">abc</div>
<div class="t" style="left:264.00px;top:70.00px;font-size:13px;color:#555;font-weight:bold;">x</div>
<div class="t" style="left:286.00px;top:70.00px;font-size:13px;color:#555;font-weight:bold;">x</div>
<div class="t" style="left:272.00px;top:78.50px;font-size:7px;color:#2e6bb5;font-weight:bold;">2</div>
<div class="t" style="left:294.00px;top:71.00px;font-size:7px;color:#2e6bb5;font-weight:bold;">2</div>
<div class="t" style="left:301.90px;top:40.00px;font-size:14px;color:#555;">A</div>
<div class="t" style="left:324.80px;top:43.00px;font-size:11px;color:#555;">A</div>
<div class="t" style="left:352.20px;top:39.00px;font-size:13px;color:#555;transform:scale(0.9250,1);">Aa</div>
<div class="t" style="left:385.10px;top:69.00px;font-size:14px;color:#555;">A</div>
<div class="t" style="left:1274.72px;top:34.00px;font-size:11px;color:#444;transform:scale(1.0800,1);">Find</div>
<div class="t" style="left:1274.55px;top:57.00px;font-size:11px;color:#444;transform:scale(1.0462,1);">Replace</div>
<div class="t" style="left:1275.60px;top:80.00px;font-size:11px;color:#444;transform:scale(0.9710,1);">Select</div>
<div class="t" style="left:660.50px;top:71.60px;font-size:11px;color:#444;transform:scale(1.0886,1);">¶ Normal</div>
<div class="t" style="left:726.30px;top:71.60px;font-size:11px;color:#444;transform:scale(1.0167,1);">¶ No Spac...</div>
<div class="t" style="left:801.93px;top:71.60px;font-size:11px;color:#444;transform:scale(1.0673,1);">Heading 1</div>
<div class="t" style="left:874.22px;top:71.60px;font-size:11px;color:#444;transform:scale(1.0796,1);">Heading 2</div>
<div class="t" style="left:962.90px;top:71.60px;font-size:11px;color:#444;transform:scale(1.0650,1);">Title</div>
<div class="t" style="left:1025.00px;top:71.60px;font-size:11px;color:#444;transform:scale(1.0811,1);">Subtitle</div>
<div class="t" style="left:1086.20px;top:71.60px;font-size:11px;color:#444;transform:scale(1.0373,1);">Subtle Em...</div>
<div class="t" style="left:1163.45px;top:71.60px;font-size:11px;color:#444;transform:scale(1.0511,1);">Emphasis</div>
<div class="t" style="left:3.47px;top:686.00px;font-size:11px;color:#fff;transform:scale(0.9323,1);">PAGE 1 OF 1</div>
<div class="t" style="left:85.10px;top:686.00px;font-size:11px;color:#fff;transform:scale(0.9789,1);">99 WORDS</div>
<div class="t" style="left:191.50px;top:686.00px;font-size:11px;color:#fff;transform:scale(0.9035,1);">ENGLISH (UNITED STATES)</div>
<div class="t" style="left:1323.41px;top:686.00px;font-size:11px;color:#fff;transform:scale(0.9933,1);">150 %</div>
<div class="t" style="left:72.62px;top:123.00px;font-size:9.6px;color:#4a4a4a;">3</div>
<div class="t" style="left:129.31px;top:123.00px;font-size:9.6px;color:#4a4a4a;">2</div>
<div class="t" style="left:185.51px;top:123.00px;font-size:9.6px;color:#4a4a4a;">1</div>
<div class="t" style="left:298.89px;top:123.00px;font-size:9.6px;color:#4a4a4a;">1</div>
<div class="t" style="left:356.09px;top:123.00px;font-size:9.6px;color:#4a4a4a;">2</div>
<div class="t" style="left:412.78px;top:123.00px;font-size:9.6px;color:#4a4a4a;">3</div>
<div class="t" style="left:469.47px;top:123.00px;font-size:9.6px;color:#4a4a4a;">4</div>
<div class="t" style="left:526.16px;top:123.00px;font-size:9.6px;color:#4a4a4a;">5</div>
<div class="t" style="left:582.86px;top:123.00px;font-size:9.6px;color:#4a4a4a;">6</div>
<div class="t" style="left:639.55px;top:123.00px;font-size:9.6px;color:#4a4a4a;">7</div>
<div class="t" style="left:696.24px;top:123.00px;font-size:9.6px;color:#4a4a4a;">8</div>
<div class="t" style="left:752.94px;top:123.00px;font-size:9.6px;color:#4a4a4a;">9</div>
<div class="t" style="left:806.61px;top:123.00px;font-size:9.6px;color:#4a4a4a;transform:scale(0.9200,1);">10</div>
<div class="t" style="left:863.20px;top:123.00px;font-size:9.6px;color:#4a4a4a;transform:scale(1.0222,1);">11</div>
<div class="t" style="left:919.89px;top:123.00px;font-size:9.6px;color:#4a4a4a;transform:scale(1.0222,1);">12</div>
<div class="t" style="left:976.59px;top:123.00px;font-size:9.6px;color:#4a4a4a;transform:scale(1.0222,1);">13</div>
<div class="t" style="left:1033.28px;top:123.00px;font-size:9.6px;color:#4a4a4a;transform:scale(1.0222,1);">14</div>
<div class="t" style="left:1089.97px;top:123.00px;font-size:9.6px;color:#4a4a4a;transform:scale(1.0222,1);">15</div>
<div class="t" style="left:1146.67px;top:123.00px;font-size:9.6px;color:#4a4a4a;transform:scale(1.0222,1);">16</div>
<div class="t" style="left:1203.46px;top:123.00px;font-size:9.6px;color:#4a4a4a;transform:scale(0.9200,1);">17</div>
<div class="clip" style="left:0;top:0;width:1218px;height:100px;"><div class="t" style="left:1161.18px;top:43.12px;font-size:18px;color:#000;transform:scale(0.9833,0.93);font-style:italic;font-family:'Liberation Serif', serif;">A</div></div>
<div class="clip" style="left:0;top:0;width:1146px;height:100px;"><div class="t" style="left:1088.98px;top:43.12px;font-size:18px;color:#404040;transform:scale(0.9833,0.93);font-style:italic;font-family:'Liberation Serif', serif;">A</div></div>
<div class="clip" style="left:0;top:0;width:1218px;height:100px;"><div class="t" style="left:1172.70px;top:43.12px;font-size:18px;color:#000;transform:scale(0.9556,0.93);font-style:italic;font-family:'Liberation Serif', serif;">a</div></div>
<div class="clip" style="left:0;top:0;width:1146px;height:100px;"><div class="t" style="left:1100.50px;top:43.12px;font-size:18px;color:#404040;transform:scale(0.9556,0.93);font-style:italic;font-family:'Liberation Serif', serif;">a</div></div>
<div class="clip" style="left:0;top:0;width:1218px;height:100px;"><div class="t" style="left:1182.60px;top:43.12px;font-size:18px;color:#000;transform:scale(1.0818,0.93);font-style:italic;font-family:'Liberation Serif', serif;">B</div></div>
<div class="clip" style="left:0;top:0;width:1146px;height:100px;"><div class="t" style="left:1110.40px;top:43.12px;font-size:18px;color:#404040;transform:scale(1.0818,0.93);font-style:italic;font-family:'Liberation Serif', serif;">B</div></div>
<div class="clip" style="left:0;top:0;width:1218px;height:100px;"><div class="t" style="left:1195.20px;top:43.12px;font-size:18px;color:#000;transform:scale(0.9556,0.93);font-style:italic;font-family:'Liberation Serif', serif;">b</div></div>
<div class="clip" style="left:0;top:0;width:1146px;height:100px;"><div class="t" style="left:1123.00px;top:43.12px;font-size:18px;color:#404040;transform:scale(0.9556,0.93);font-style:italic;font-family:'Liberation Serif', serif;">b</div></div>
<div class="clip" style="left:0;top:0;width:1218px;height:100px;"><div class="t" style="left:1204.09px;top:43.12px;font-size:18px;color:#000;transform:scale(0.9091,0.93);font-style:italic;font-family:'Liberation Serif', serif;">C</div></div>
<div class="clip" style="left:0;top:0;width:1146px;height:100px;"><div class="t" style="left:1131.89px;top:43.12px;font-size:18px;color:#404040;transform:scale(0.9091,0.93);font-style:italic;font-family:'Liberation Serif', serif;">C</div></div>
<div class="clip" style="left:0;top:0;width:1218px;height:100px;"><div class="t" style="left:1215.60px;top:43.12px;font-size:18px;color:#000;transform:scale(0.9500,0.93);font-style:italic;font-family:'Liberation Serif', serif;">c</div></div>
<div class="clip" style="left:0;top:0;width:1146px;height:100px;"><div class="t" style="left:1143.40px;top:43.12px;font-size:18px;color:#404040;transform:scale(0.9500,0.93);font-style:italic;font-family:'Liberation Serif', serif;">c</div></div>
</body></html>
